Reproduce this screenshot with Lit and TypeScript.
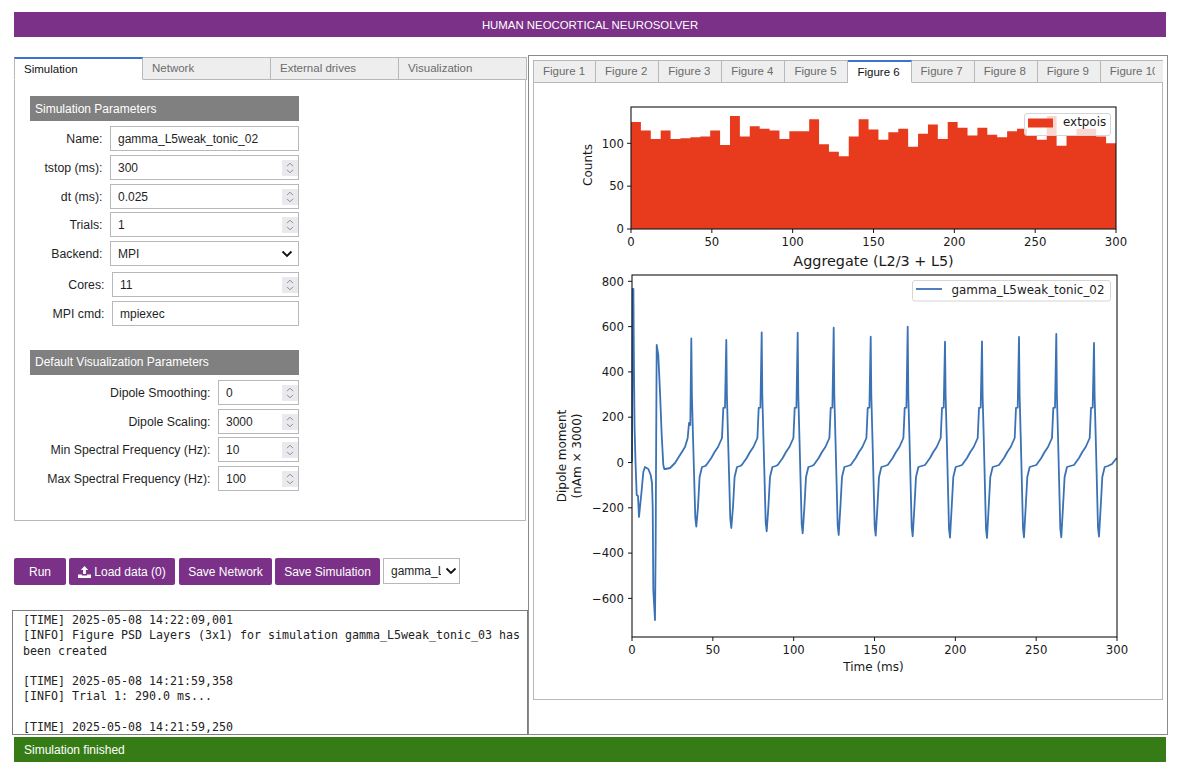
import { LitElement, html, css, svg } from "lit";
import { customElement } from "lit/decorators.js";

const BINS = [125,115,105,115,105,106,107,108,115,98,132,108,120,117,115,105,114,114,128,99,90,85,108,128,116,104,113,117,96,111,122,105,125,118,109,118,110,107,114,117,109,104,132,97,109,117,117,108,100];
const PEAKS: [number, number, number][] = [
  [691.3, 338.3, 526.7],[726.3, 340, 528],[761.7, 332.3, 531.3],[797.7, 332.7, 533.3],
  [833.7, 327.7, 535],[870.7, 336.7, 535.7],[907.7, 326.7, 536.3],[945, 341.7, 537.7],
  [982, 341.3, 538],[1019, 337, 537.3],[1056.3, 334, 537.3],[1094, 343, 536.7],
];
const START: [number, number][] = [
  [632, 462],[632.6, 289],[633.4, 289],[634, 372],[634.6, 428],[635.5, 462],[636.7, 495],[638, 496],[639, 517],
  [640, 507],[641.7, 490],[643.3, 472],[645, 467],[648.3, 469],[650.7, 475],[652, 483],[652.7, 507],
  [653.3, 590],[655, 620],[655.7, 540],[656, 473],[656.7, 345],[658.3, 355],[660, 392],[661.7, 435],[663.3, 465],
  [664.3, 469],[665.5, 469],[670, 468],[675, 463],[680, 455],[685, 447],[687.7, 438],[689, 423],[690.3, 425],
];

function tracePoints(): string {
  const pts: [number, number][] = [...START];
  PEAKS.forEach(([x, p, t], i) => {
    pts.push([x, p], [x + 0.6, 395], [x + 1.8, 440], [x + 4, t - 9], [x + 5, t], [x + 6.7, 507], [x + 8.3, 477], [x + 10.7, 467], [x + 14, 466]);
    const next = PEAKS[i + 1];
    if (next) {
      const n = next[0];
      pts.push([n - 20, 465], [n - 15, 458], [n - 11.7, 452], [n - 8.3, 447], [n - 4.3, 438], [n - 3, 408], [n - 1.3, 407.7]);
    }
  });
  pts.push([1112, 464], [1116.7, 458]);
  return pts.map(([a, b]) => `${a},${b}`).join(" ");
}

const histX = (t: number) => 631 + t * 1.6167;
const histY = (v: number) => 229 - v * 0.857;
const dipX = (t: number) => 632 + t * 1.6167;
const dipY = (v: number) => 462.5 - v * 0.2265;

function histPath(): string {
  const w = 485 / BINS.length;
  let d = `M631 229`;
  BINS.forEach((v, i) => {
    d += `L${631 + i * w} ${histY(v)}L${631 + (i + 1) * w} ${histY(v)}`;
  });
  return d + `L1116 229Z`;
}

const spinner = html`<svg class="spin" viewBox="0 0 16 16" aria-hidden="true"><path d="M5 6.2 8 3.2l3 3M5 9.8l3 3 3-3" fill="none" stroke="#8b8b8b" stroke-width="1"/></svg>`;

@customElement("app-root")
export class AppRoot extends LitElement {
  static styles = css`
    :host { display: block; width: 1183px; height: 772px; overflow: hidden; background: #fff; color: #1f1f1f;
      font-family: "Liberation Sans", Arial, sans-serif; font-size: 12.3px; }
    * { box-sizing: border-box; }
    .app { padding: 12px 17px 0 14px; display: flex; flex-direction: column; }
    .header { height: 25px; background: #7a3187; color: #fff; display: flex; align-items: center; justify-content: center; font-size: 11.4px; }
    .main { display: flex; margin-top: 18px; height: 680px; }
    .left { width: 514px; flex: none; padding-top: 2px; display: flex; flex-direction: column; }
    .right { width: 640px; flex: none; margin-right: -2px; border: 1px solid #8a8a8a; padding: 4px; }
    .status { height: 25px; margin-top: 2px; background: #367c16; color: #fff; display: flex; align-items: center; padding-left: 10px; font-size: 12px; }

    .tabs { display: flex; width: 512px; height: 23px; }
    .tab { width: 128px; flex: none; height: 23px; border: 1px solid #b8b8b8; border-left-width: 0; background: #eeeeee; color: #6b6b6b;
      padding: 0 0 2px 9px; display: flex; align-items: center; font-size: 11.5px; white-space: nowrap; overflow: hidden; }
    .tab:first-child { border-left-width: 1px; width: 129px; }
    .tab.on { background: #fff; color: #111; border-bottom-color: #fff; border-top: 2px solid #3a74cf; padding-bottom: 1px; }
    .panel { width: 512px; height: 441px; border: 1px solid #b8b8b8; border-top: 0; padding: 16px 15px 0; }
    .section { width: 269px; height: 25px; background: #808080; color: #fff; display: flex; align-items: center; padding-left: 5px; font-size: 12px; }
    .rows { display: flex; flex-direction: column; gap: 3.75px; margin-top: 5px; width: 269px; }
    .row { display: flex; align-items: center; gap: 7px; height: 25px; }
    .row.shift { margin-left: 2px; }
    .row.sep { margin-top: 2.25px; }
    .lab { width: 72.5px; flex: none; text-align: right; white-space: nowrap; padding-top: 1px; }
    .lab.wide { width: 180.5px; }
    .field { position: relative; flex: 1; min-width: 0; height: 25px; border: 1px solid #b8b8b8; display: flex; align-items: center; background: #fff; font-size: 12px; }
    .field input, .field select { border: 0; outline: 0; background: transparent; font: inherit; color: inherit; width: 100%; height: 100%; padding: 1px 18px 0 7.5px; appearance: none; -webkit-appearance: none; }
    .spin { position: absolute; right: 0; top: 4px; width: 16px; height: 16px; background: #e9e9ee; }
    .chev { position: absolute; right: 5px; top: 8px; width: 12px; height: 8px; pointer-events: none; }
    .gap { height: 24px; }

    .actions { display: flex; align-items: flex-start; margin-top: 37px; height: 27px; }
    button { height: 27px; border: 0; border-radius: 2px; background: #7a3187; color: #fff; font: inherit; font-size: 12px; padding: 0; display: flex; align-items: center; justify-content: center; gap: 3px; }
    .b1 { width: 52px; }
    .b2 { width: 106px; margin-left: 3px; }
    .b3 { width: 93px; margin-left: 4px; }
    .b4 { width: 105px; margin-left: 3px; }
    .pick { position: relative; width: 77px; height: 26px; margin-left: 3px; border: 1px solid #b8b8b8; font-size: 12px; }
    .pick select { width: 100%; height: 100%; border: 0; outline: 0; background: transparent; font: inherit; color: inherit; padding: 0 18px 0 7px; appearance: none; -webkit-appearance: none; }
    .pick .chev { right: 2px; top: 8px; }
    .upl { width: 13px; height: 12px; }

    .log { margin: 25px 0 0 -2px; width: 516px; height: 125px; border: 1px solid #7d7d7d; overflow: hidden; padding: 2px 6px 0 10px;
      font-family: "DejaVu Sans Mono", monospace; font-size: 11.63px; line-height: 15.3px; color: #222; white-space: pre-wrap; }

    .ftabs { display: flex; width: 630px; height: 23px; overflow: hidden; }
    .ftab { width: 63.1px; flex: none; height: 23px; border: 1px solid #b8b8b8; border-left-width: 0; background: #eeeeee; color: #6b6b6b;
      display: flex; align-items: center; padding: 0 8px 2px 9px; font-size: 11.5px; white-space: nowrap; }
    .ftab span { display: block; overflow: hidden; }
    .ftab:first-child { border-left-width: 1px; }
    .ftab.on { background: #fff; color: #111; border-bottom-color: #fff; border-top: 2px solid #3a74cf; padding-bottom: 1px; }
    .fpanel { width: 630px; height: 617px; border: 1px solid #b8b8b8; border-top: 0; }
    .chart { display: block; width: 628px; height: 616px; }
    .chart text { font-family: "DejaVu Sans", sans-serif; font-size: 11.7px; fill: #1a1a1a; }
    .chart .axis { font-size: 12px; }
    .chart .title { font-size: 14.4px; }
    .chart .leg { font-size: 11.9px; }
  `;

  private numRow(label: string, value: string, wide = false, extra = "") {
    return html`<div class="row ${extra}"><span class="lab ${wide ? "wide" : ""}">${label}</span><div class="field"><input .value=${value} />${spinner}</div></div>`;
  }

  private textRow(label: string, value: string, extra = "") {
    return html`<div class="row ${extra}"><span class="lab">${label}</span><div class="field"><input .value=${value} /></div></div>`;
  }

  private chev() {
    return html`<svg class="chev" viewBox="0 0 12 8" aria-hidden="true"><path d="M1.5 1.5 6 6l4.5-4.5" fill="none" stroke="#111" stroke-width="1.8"/></svg>`;
  }

  private chart() {
    const histXT = [0, 50, 100, 150, 200, 250, 300];
    const dipYT = [800, 600, 400, 200, 0, -200, -400, -600];
    return svg`
      <path d=${histPath()} fill="#e83b1d"/>
      <rect x="631" y="107" width="485" height="122" fill="none" stroke="#151515" stroke-width="1.1"/>
      ${histXT.map(t => svg`<path d="M${histX(t)} 229v4" stroke="#151515" stroke-width="1"/><text x=${histX(t)} y="246" text-anchor="middle">${t}</text>`)}
      ${[0, 50, 100].map(v => svg`<path d="M627 ${histY(v)}h4" stroke="#151515" stroke-width="1"/><text x="624" y=${histY(v) + 4.2} text-anchor="end">${v}</text>`)}
      <text class="axis" x="0" y="0" text-anchor="middle" transform="translate(592 165) rotate(-90)">Counts</text>
      <rect x="1024.5" y="113.5" width="86" height="22" rx="2.5" fill="#fff" fill-opacity="0.8" stroke="#d5d5d5"/>
      <rect x="1028" y="118.5" width="25" height="9" fill="#e83b1d"/>
      <text class="leg" x="1063" y="125.5">extpois</text>
      <text class="title" x="873.5" y="266" text-anchor="middle">Aggregate (L2/3 + L5)</text>

      <polyline points=${tracePoints()} fill="none" stroke="#3b72b5" stroke-width="1.8" stroke-linejoin="round"/>
      <rect x="632" y="275" width="485" height="362" fill="none" stroke="#151515" stroke-width="1.1"/>
      ${histXT.map(t => svg`<path d="M${dipX(t)} 637v4" stroke="#151515" stroke-width="1"/><text x=${dipX(t)} y="654" text-anchor="middle">${t}</text>`)}
      ${dipYT.map(v => svg`<path d="M628 ${dipY(v)}h4" stroke="#151515" stroke-width="1"/><text x="624" y=${dipY(v) + 4.2} text-anchor="end">${v < 0 ? "\u2212" + -v : v}</text>`)}
      <text class="axis" x="873.5" y="671" text-anchor="middle">Time (ms)</text>
      <text class="axis" text-anchor="middle" transform="translate(566 456) rotate(-90)">Dipole moment</text>
      <text class="axis" text-anchor="middle" transform="translate(581 456) rotate(-90)">(nAm \u00d7 3000)</text>
      <rect x="912.5" y="280.5" width="198" height="20.5" rx="2.5" fill="#fff" fill-opacity="0.8" stroke="#d5d5d5"/>
      <path d="M916 289h26" stroke="#3b72b5" stroke-width="1.8"/>
      <text class="leg" x="951.5" y="293.5">gamma_L5weak_tonic_02</text>
    `;
  }

  render() {
    const logText = `[TIME] 2025-05-08 14:22:09,001
[INFO] Figure PSD Layers (3x1) for simulation gamma_L5weak_tonic_03 has been created

[TIME] 2025-05-08 14:21:59,358
[INFO] Trial 1: 290.0 ms...

[TIME] 2025-05-08 14:21:59,250`;
    const figs = ["Figure 1","Figure 2","Figure 3","Figure 4","Figure 5","Figure 6","Figure 7","Figure 8","Figure 9","Figure 10"];
    return html`<div class="app">
      <div class="header">HUMAN NEOCORTICAL NEUROSOLVER</div>
      <div class="main">
        <div class="left">
          <div class="tabs">
            <div class="tab on">Simulation</div><div class="tab">Network</div><div class="tab">External drives</div><div class="tab">Visualization</div>
          </div>
          <div class="panel">
            <div class="section">Simulation Parameters</div>
            <div class="rows">
              ${this.textRow("Name:", "gamma_L5weak_tonic_02")}
              ${this.numRow("tstop (ms):", "300")}
              ${this.numRow("dt (ms):", "0.025")}
              ${this.numRow("Trials:", "1")}
              <div class="row"><span class="lab">Backend:</span><div class="field"><select><option>MPI</option><option>Joblib</option></select>${this.chev()}</div></div>
              ${this.numRow("Cores:", "11", false, "shift sep")}
              ${this.textRow("MPI cmd:", "mpiexec", "shift")}
            </div>
            <div class="gap"></div>
            <div class="section">Default Visualization Parameters</div>
            <div class="rows">
              ${this.numRow("Dipole Smoothing:", "0", true)}
              ${this.numRow("Dipole Scaling:", "3000", true)}
              ${this.numRow("Min Spectral Frequency (Hz):", "10", true)}
              ${this.numRow("Max Spectral Frequency (Hz):", "100", true)}
            </div>
          </div>
          <div class="actions">
            <button class="b1">Run</button>
            <button class="b2"><svg class="upl" viewBox="0 0 13 12" aria-hidden="true"><path fill="#fff" d="M6.5 0 10.2 3.9H7.9V8H5.1V3.9H2.8ZM0 8.6h3.9v1h5.2v-1H13V12H0Z"/></svg>Load data (0)</button>
            <button class="b3">Save Network</button>
            <button class="b4">Save Simulation</button>
            <div class="pick"><select><option>gamma_L5weak_tonic_02</option></select>${this.chev()}</div>
          </div>
          <div class="log">${logText}</div>
        </div>
        <div class="right">
          <div class="ftabs">${figs.map((f, i) => html`<div class="ftab ${i === 5 ? "on" : ""}"><span>${f}</span></div>`)}</div>
          <div class="fpanel"><svg class="chart" viewBox="534 83 628 616">${this.chart()}</svg></div>
        </div>
      </div>
      <div class="status">Simulation finished</div>
    </div>`;
  }
}
